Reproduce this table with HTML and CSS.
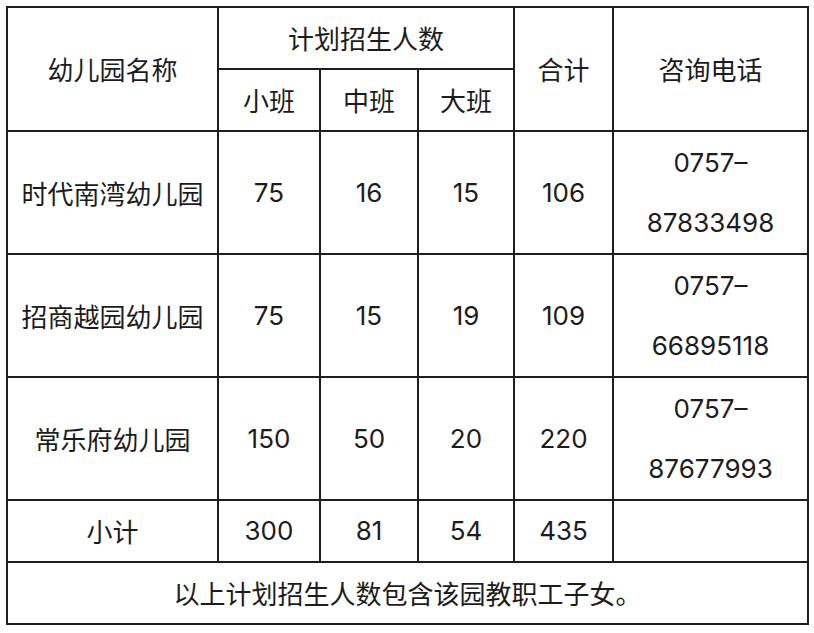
FILE: index.html
```html
<!DOCTYPE html>
<html lang="zh-CN">
<head>
<meta charset="utf-8">
<link rel="stylesheet" href="styles.css">
</head>
<body>
<table class="plan">
  <colgroup>
    <col class="c-name"><col class="c-s"><col class="c-m"><col class="c-l"><col class="c-t"><col class="c-p">
  </colgroup>
  <tr class="r-h">
    <td rowspan="2">幼儿园名称</td>
    <td colspan="3">计划招生人数</td>
    <td rowspan="2">合计</td>
    <td rowspan="2">咨询电话</td>
  </tr>
  <tr class="r-h">
    <td>小班</td><td>中班</td><td>大班</td>
  </tr>
  <tr class="r-b">
    <td>时代南湾幼儿园</td><td class="num">75</td><td class="num">16</td><td class="num">15</td><td class="num">106</td><td class="num">0757–<br>87833498</td>
  </tr>
  <tr class="r-b">
    <td>招商越园幼儿园</td><td class="num">75</td><td class="num">15</td><td class="num">19</td><td class="num">109</td><td class="num">0757–<br>66895118</td>
  </tr>
  <tr class="r-b">
    <td>常乐府幼儿园</td><td class="num">150</td><td class="num">50</td><td class="num">20</td><td class="num">220</td><td class="num">0757–<br>87677993</td>
  </tr>
  <tr class="r-h">
    <td>小计</td><td class="num">300</td><td class="num">81</td><td class="num">54</td><td class="num">435</td><td></td>
  </tr>
  <tr class="r-h">
    <td colspan="6">以上计划招生人数包含该园教职工子女。</td>
  </tr>
</table>
</body>
</html>
```

FILE: styles.css
```css
html, body {
  margin: 0;
  padding: 0;
  background: #ffffff;
}

body {
  padding: 6px 0 0 6px;
  font-family: "Noto Sans CJK SC", "Noto Sans", sans-serif;
  color: #1c1c1c;
}

.plan {
  border-collapse: collapse;
  table-layout: fixed;
  width: 803px;
}

.c-name { width: 211px; }
.c-s { width: 102px; }
.c-m { width: 98px; }
.c-l { width: 96px; }
.c-t { width: 99px; }
.c-p { width: 195px; }

.plan td {
  border: 2px solid #1e1e1e;
  padding: 0;
  text-align: center;
  vertical-align: middle;
  font-size: 26px;
  line-height: 60px;
  white-space: nowrap;
}

.plan td.num {
  font-family: "Inter", "Liberation Sans", sans-serif;
  font-size: 26px;
}

.r-h td { height: 60px; }
.r-b td { height: 121px; }
```
